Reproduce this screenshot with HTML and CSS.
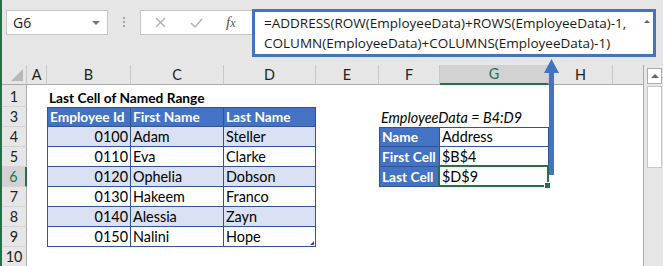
FILE: index.html
```html
<!DOCTYPE html>
<html lang="en">
<head>
  <meta charset="UTF-8">
  <title>Last Cell of Named Range</title>
  <link rel="stylesheet" href="styles.css">
</head>
<body>

<div class="window">
  <div class="formula-row">
    <div class="name-box">
      <span>G6</span>
      <span class="caret"></span>
    </div>
    <div class="grip">
      <svg width="3" height="11" viewBox="0 0 3 11"><rect x="0" y="0" width="2" height="2"/><rect x="0" y="4" width="2" height="2"/><rect x="0" y="8" width="2" height="2"/></svg>
    </div>
    <div class="fx-box">
      <svg class="btn-icon cancel" width="11" height="11" viewBox="0 0 11 11"><path d="M1 1 L10 10 M10 1 L1 10"/></svg>
      <svg class="btn-icon enter" width="13" height="10" viewBox="0 0 13 10"><path d="M1 5 L5 9 L12 1"/></svg>
      <span class="fx">f<span>x</span></span>
    </div>
    <div class="formula">
      =ADDRESS(ROW(EmployeeData)+ROWS(EmployeeData)-1,<br>
      COLUMN(EmployeeData)+COLUMNS(EmployeeData)-1)
      <span class="collapse"></span>
    </div>
  </div>

  <div class="sheet">
    <table class="grid">
      <colgroup>
        <col style="width:25px"><col style="width:20px"><col style="width:84px"><col style="width:93px"><col style="width:92px">
        <col style="width:63px"><col style="width:61px"><col style="width:109px"><col style="width:64px"><col style="width:30px">
      </colgroup>
      <tr class="col-heads">
        <th class="corner"><span class="select-all"></span></th>
        <th>A</th><th>B</th><th>C</th><th>D</th><th>E</th><th>F</th><th class="active">G</th><th>H</th><th class="last"></th>
      </tr>
      <tr class="row-1">
        <th class="rh">1</th>
        <td></td><td class="title">Last Cell of Named Range</td><td></td><td></td><td></td><td></td><td></td><td></td><td></td>
      </tr>
      <tr>
        <th class="rh">3</th>
        <td></td>
        <td class="t-head first">Employee Id</td><td class="t-head">First Name</td><td class="t-head">Last Name</td>
        <td></td><td class="note">EmployeeData = B4:D9</td><td></td><td></td><td></td>
      </tr>
      <tr>
        <th class="rh">4</th>
        <td></td>
        <td class="t-cell first band num">0100</td><td class="t-cell band">Adam</td><td class="t-cell band">Steller</td>
        <td></td><td class="k-cell top">Name</td><td class="v-cell top">Address</td><td></td><td></td>
      </tr>
      <tr>
        <th class="rh">5</th>
        <td></td>
        <td class="t-cell first num">0110</td><td class="t-cell">Eva</td><td class="t-cell">Clarke</td>
        <td></td><td class="k-cell">First Cell</td><td class="v-cell">$B$4</td><td></td><td></td>
      </tr>
      <tr>
        <th class="rh active">6</th>
        <td></td>
        <td class="t-cell first band num">0120</td><td class="t-cell band">Ophelia</td><td class="t-cell band">Dobson</td>
        <td></td><td class="k-cell">Last Cell</td>
        <td class="v-cell selected">$D$9<span class="sel-box"></span><span class="fill-handle"></span></td>
        <td></td><td></td>
      </tr>
      <tr>
        <th class="rh">7</th>
        <td></td>
        <td class="t-cell first num">0130</td><td class="t-cell">Hakeem</td><td class="t-cell">Franco</td>
        <td></td><td></td><td></td><td></td><td></td>
      </tr>
      <tr>
        <th class="rh">8</th>
        <td></td>
        <td class="t-cell first band num">0140</td><td class="t-cell band">Alessia</td><td class="t-cell band">Zayn</td>
        <td></td><td></td><td></td><td></td><td></td>
      </tr>
      <tr>
        <th class="rh">9</th>
        <td></td>
        <td class="t-cell first num">0150</td><td class="t-cell">Nalini</td><td class="t-cell corner-cell">Hope<span class="resize"></span></td>
        <td></td><td></td><td></td><td></td><td></td>
      </tr>
      <tr>
        <th class="rh">10</th>
        <td></td><td></td><td></td><td></td><td></td><td></td><td></td><td></td><td></td>
      </tr>
    </table>

    <div class="vscroll">
      <div class="scroll-up"></div>
      <div class="scroll-thumb"></div>
    </div>
  </div>

  <svg class="callout-arrow" width="17" height="120" viewBox="0 0 17 120">
    <polygon points="8.5,2 1,16 16,16"/>
    <rect x="6" y="15" width="5" height="103"/>
  </svg>
</div>

</body>
</html>
```

FILE: styles.css
```css
body {
  margin: 0;
  background: #fff;
  overflow: hidden;
  font-family: 'Lato', 'Liberation Sans', sans-serif;
}
.window {
  position: relative;
  width: 663px;
  height: 266px;
  box-sizing: border-box;
  border-left: 2px solid #217346;
  background: #e6e6e6;
  overflow: hidden;
}

/* formula bar */
.formula-row {
  display: flex;
  align-items: flex-start;
  height: 65px;
}
.name-box {
  margin: 10px 0 0 4px;
  width: 102px;
  height: 25px;
  box-sizing: border-box;
  background: #fff;
  border: 1px solid #c6c6c6;
  display: flex;
  align-items: center;
  justify-content: space-between;
  padding: 0 7px 0 6px;
  font-family: 'Open Sans', sans-serif;
  font-size: 14px;
  color: #222;
}
.caret {
  width: 0;
  height: 0;
  border-left: 4px solid transparent;
  border-right: 4px solid transparent;
  border-top: 4px solid #777;
}
.grip {
  width: 32px;
  height: 25px;
  margin-top: 10px;
  display: flex;
  align-items: center;
  justify-content: center;
}
.grip svg { fill: #a6a6a6; }
.fx-box {
  margin-top: 10px;
  width: 112px;
  height: 25px;
  box-sizing: border-box;
  background: #fff;
  border: 1px solid #c6c6c6;
  border-right: none;
  display: flex;
  align-items: center;
  padding-left: 14px;
}
.btn-icon {
  fill: none;
  stroke: #b0b0b0;
  stroke-width: 1.4;
}
.btn-icon.cancel { margin-right: 24px; }
.btn-icon.enter { margin-right: 23px; }
.fx {
  font-family: 'Liberation Serif', serif;
  font-style: italic;
  font-size: 15px;
  color: #555;
}
.fx span { font-size: 12px; }
.formula {
  position: relative;
  margin-top: 9px;
  width: 404px;
  height: 48px;
  box-sizing: border-box;
  background: #fff;
  border: 3px solid #4472c4;
  padding: 1px 0 0 9px;
  font-family: 'Open Sans', sans-serif;
  font-size: 13.5px;
  line-height: 20px;
  color: #1a1a1a;
  white-space: nowrap;
}
.collapse {
  position: absolute;
  right: 3px;
  top: 8px;
  width: 0;
  height: 0;
  border-left: 3px solid transparent;
  border-right: 3px solid transparent;
  border-bottom: 3px solid #666;
}

/* sheet */
.sheet {
  display: flex;
  background: #fff;
}
.grid {
  table-layout: fixed;
  border-collapse: separate;
  border-spacing: 0;
  width: 641px;
  font-size: 14.4px;
  color: #000;
}
.grid td, .grid th {
  height: 20px;
  padding: 0 2px;
  box-sizing: border-box;
  line-height: 18px;
  white-space: nowrap;
  overflow: visible;
  vertical-align: bottom;
  text-align: left;
}
.grid th { font-weight: normal; }
.col-heads th {
  background: #e6e6e6;
  border-right: 1px solid #c8c8c8;
  border-bottom: 1px solid #ababab;
  text-align: center;
  color: #222;
  padding: 0;
}
.col-heads th.active {
  background: #d2d2d2;
  color: #217346;
  border-bottom: 2px solid #217346;
}
.col-heads th.last { border-right: none; }
.corner { position: relative; }
.select-all {
  position: absolute;
  right: 3px;
  bottom: 3px;
  width: 0;
  height: 0;
  border-left: 12px solid transparent;
  border-bottom: 12px solid #b8b8b8;
}
.grid th.rh {
  background: #e6e6e6;
  border-right: 1px solid #ababab;
  border-bottom: 1px solid #d4d4d4;
  text-align: center;
  color: #222;
  padding: 0;
}
.grid th.rh.active {
  background: #d2d2d2;
  color: #217346;
  border-right: 2px solid #217346;
}
.row-1 td, .row-1 th { height: 22px; }
.title {
  font-weight: bold;
  font-size: 13.7px;
}
.note { font-style: italic; }

/* data table */
.t-head {
  background: #4472c4;
  color: #fff;
  font-weight: bold;
  font-size: 13.7px;
  border-top: 1px solid #2f5597;
  border-right: 1px solid #2f5597;
  border-bottom: 1px solid #2f5597;
}
.t-cell {
  border-right: 1px solid #2f5597;
  border-bottom: 1px solid #2f5597;
}
.grid .first { border-left: 1px solid #2f5597; }
.band { background: #d9e1f2; }
.grid .num { text-align: right; }
.corner-cell { position: relative; }
.resize {
  position: absolute;
  right: 1px;
  bottom: 1px;
  width: 0;
  height: 0;
  border-left: 4px solid transparent;
  border-bottom: 4px solid #2f5597;
}

/* lookup block */
.k-cell {
  background: #4472c4;
  color: #fff;
  font-weight: bold;
  font-size: 13.7px;
  border-left: 1px solid #2f5597;
  border-right: 1px solid #2f5597;
  border-bottom: 1px solid #2f5597;
}
.v-cell {
  border-right: 1px solid #2f5597;
  border-bottom: 1px solid #2f5597;
}
.k-cell.top, .v-cell.top { border-top: 1px solid #2f5597; }
.selected { position: relative; }
.sel-box {
  position: absolute;
  left: -2px;
  top: -2px;
  right: -1px;
  bottom: -1px;
  border: 2px solid #217346;
}
.fill-handle {
  position: absolute;
  right: -3px;
  bottom: -3px;
  width: 5px;
  height: 5px;
  background: #217346;
  border: 1px solid #fff;
}

/* scrollbar */
.vscroll {
  width: 20px;
  height: 201px;
  box-sizing: border-box;
  background: #e6e6e6;
  border-left: 1px solid #ababab;
  padding: 3px 0 0 3px;
}
.scroll-up {
  width: 15px;
  height: 16px;
  box-sizing: border-box;
  background: #fff;
  border: 1px solid #ababab;
  position: relative;
}
.scroll-up::after {
  content: '';
  position: absolute;
  left: 3px;
  top: 5px;
  border-left: 4px solid transparent;
  border-right: 4px solid transparent;
  border-bottom: 4px solid #666;
}
.scroll-thumb {
  margin-top: 2px;
  width: 15px;
  height: 82px;
  box-sizing: border-box;
  background: #fff;
  border: 1px solid #c6c6c6;
}

.callout-arrow {
  position: absolute;
  left: 541px;
  top: 57px;
  fill: #4472c4;
}
```
